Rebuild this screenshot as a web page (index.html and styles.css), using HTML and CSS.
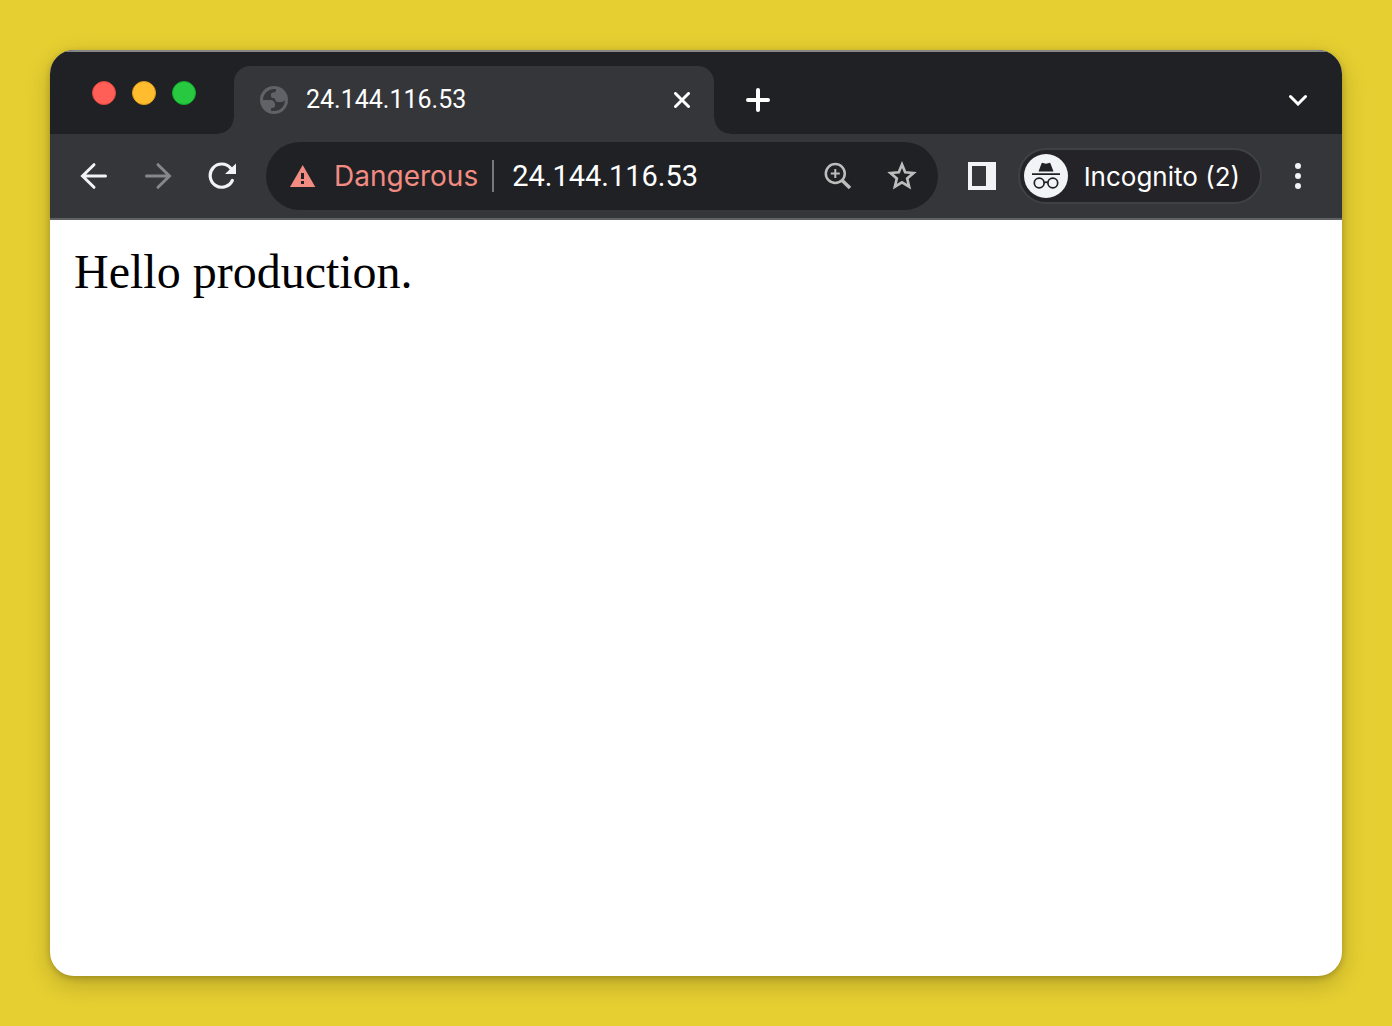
FILE: index.html
```html
<!DOCTYPE html>
<html lang="en">
<head>
<meta charset="utf-8">
<title>24.144.116.53</title>
<link rel="stylesheet" href="styles.css">
</head>
<body>
<div class="window">
  <header class="tab-strip">
    <div class="lights">
      <button class="light light-close" aria-label="Close window"></button>
      <button class="light light-minimize" aria-label="Minimize window"></button>
      <button class="light light-zoom" aria-label="Zoom window"></button>
    </div>
    <div class="tab">
      <svg class="favicon" width="28" height="28" viewBox="0 0 28 28" aria-hidden="true">
        <circle cx="14" cy="14" r="14" fill="#5f6368"/>
        <path d="M3 14C3 8 8 3 14 3H16V4.500C16 6 14.500 6.500 13 6.500C11.500 6.500 11 7.500 11 9V10C11 11.500 12 12 13.500 12C15 12 15 13 15.500 14.500C16 15.500 17 16 18.500 16H21C23 16 24 15 25 14C25 20.500 20 25 14 25H11V22.500C12 21.500 15 22 15 20V18.500C15 16.500 13.500 14 10.500 14Z" fill="#35363a"/>
      </svg>
      <span class="tab-title">24.144.116.53</span>
      <button class="tab-close" aria-label="Close tab">
        <svg width="16" height="16" viewBox="0 0 16 16"><path d="M1.500 1.500L14.500 14.500M14.500 1.500L1.500 14.500" fill="none" stroke="#fff" stroke-width="3" stroke-linecap="round"/></svg>
      </button>
    </div>
    <button class="new-tab" aria-label="New tab">
      <svg width="24" height="24" viewBox="0 0 24 24"><path d="M12 2V22M2 12H22" fill="none" stroke="#fff" stroke-width="4" stroke-linecap="round"/></svg>
    </button>
    <button class="tab-search" aria-label="Search tabs">
      <svg width="20" height="12" viewBox="0 0 20 12"><path d="M2.500 2.500L10 10L17.500 2.500" fill="none" stroke="#fff" stroke-width="3" stroke-linecap="round"/></svg>
    </button>
  </header>
  <nav class="toolbar">
    <button class="tool" aria-label="Back">
      <svg width="28" height="28" viewBox="0 0 28 28"><path d="M25.500 14H3M14 2.700L2.500 14L14 25.300" fill="none" stroke="#f1f3f4" stroke-width="3" stroke-linecap="round"/></svg>
    </button>
    <button class="tool" aria-label="Forward" disabled>
      <svg width="28" height="28" viewBox="0 0 28 28"><path d="M2.500 14H25M14 2.700L25.500 14L14 25.300" fill="none" stroke="#86878a" stroke-width="3" stroke-linecap="round"/></svg>
    </button>
    <button class="tool" aria-label="Reload">
      <svg width="28" height="28" viewBox="0 0 28 28"><path d="M24.300 18.500A11.600 11.600 0 1 1 22.700 6.200" fill="none" stroke="#f1f3f4" stroke-width="3.200" stroke-linecap="round"/><path d="M28 1.500V12H17Z" fill="#f1f3f4"/></svg>
    </button>
    <div class="omnibox">
      <button class="security">
        <svg width="26" height="22" viewBox="0 0 26 22" aria-hidden="true"><path d="M12.700 0L25.300 22H0Z" fill="#f28b82"/><path d="M11 8H14V14H11ZM11 16H14V19H11Z" fill="#202124"/></svg>
        <span>Dangerous</span>
      </button>
      <input class="address" type="text" value="24.144.116.53" aria-label="Address" spellcheck="false">
      <button class="tool" aria-label="Zoom in">
        <svg width="28" height="28" viewBox="0 0 28 28"><g fill="none" stroke="#bdbdbd"><circle cx="11.300" cy="11.500" r="9.500" stroke-width="2.500"/><path d="M11.300 7V16M6.800 11.500H15.800" stroke-width="2"/><path d="M18.500 18.700L26 26" stroke-width="3.500"/></g></svg>
      </button>
      <button class="tool" aria-label="Bookmark this page">
        <svg width="30" height="30" viewBox="0 0 30 30"><path d="M15 3.500L18.200 11.300L26.500 12L20.200 17.500L22.100 25.700L15 21.400L7.900 25.700L9.800 17.500L3.500 12L11.800 11.300Z" fill="none" stroke="#bdbdbd" stroke-width="2.700"/></svg>
      </button>
    </div>
    <button class="tool side-panel" aria-label="Side panel">
      <svg width="28" height="28" viewBox="0 0 28 28"><path d="M0 0H28V28H0ZM4 4V24H18V4Z" fill="#f1f3f4" fill-rule="evenodd"/></svg>
    </button>
    <button class="profile">
      <svg width="44" height="44" viewBox="0 0 44 44" aria-hidden="true">
        <circle cx="22" cy="22" r="22" fill="#f1f3f4"/>
        <path d="M14.500 17.500L17.500 9.500Q18 8.600 19 8.900L22 9.700L25 8.900Q26 8.600 26.500 9.500L29.500 17.500Z" fill="#202124"/>
        <path d="M8 20.200H36" stroke="#202124" stroke-width="1.800"/>
        <g fill="none" stroke="#202124" stroke-width="1.700"><circle cx="15.200" cy="29" r="4.900"/><circle cx="28.800" cy="29" r="4.900"/><path d="M20 28.700Q22 27.400 24 28.700"/></g>
      </svg>
      <span>Incognito (2)</span>
    </button>
    <button class="menu" aria-label="Menu">
      <svg width="6" height="26" viewBox="0 0 6 26"><g fill="#f1f3f4"><circle cx="3" cy="3" r="3"/><circle cx="3" cy="13" r="3"/><circle cx="3" cy="23" r="3"/></g></svg>
    </button>
  </nav>
  <main class="page">Hello production.</main>
</div>
</body>
</html>
```
FILE: styles.css
```css
* {
  box-sizing: border-box;
}

body {
  display: flex;
  min-height: 100vh;
  margin: 0;
  padding: 50px;
  background: #e6cf31;
  font-family: Inter, "Liberation Sans", sans-serif;
}

button {
  display: flex;
  flex: none;
  align-items: center;
  justify-content: center;
  margin: 0;
  padding: 0;
  border: 0;
  background: none;
  color: inherit;
  font: inherit;
}

svg {
  display: block;
  flex: none;
}

.window {
  display: flex;
  flex: 1;
  flex-direction: column;
  min-width: 0;
  overflow: hidden;
  border-radius: 24px;
  background: #fff;
  box-shadow: 0 2px 6px rgba(0, 0, 0, 0.2), 0 8px 24px rgba(0, 0, 0, 0.2);
}

.tab-strip {
  display: flex;
  height: 84px;
  padding: 14px 16px 0 42px;
  border-top: 2px solid #85868a;
  background: #202124;
  color: #fff;
}

.lights {
  display: flex;
  gap: 16px;
  width: 142px;
  padding-top: 15px;
}

.light {
  width: 24px;
  height: 24px;
  border-radius: 50%;
}

.light-close {
  border: 1px solid #e2463f;
  background: #ff5f57;
}

.light-minimize {
  border: 1px solid #e1a116;
  background: #febc2e;
}

.light-zoom {
  border: 1px solid #12ac28;
  background: #28c840;
}

.tab {
  position: relative;
  display: flex;
  align-items: center;
  width: 480px;
  padding: 0 16px 0 26px;
  border-radius: 16px 16px 0 0;
  background: #35363a;
}

.tab::before,
.tab::after {
  position: absolute;
  bottom: 0;
  width: 16px;
  height: 16px;
  content: "";
}

.tab::before {
  right: 100%;
  background: radial-gradient(circle at 0 0, #202124 15px, #35363a 16px);
}

.tab::after {
  left: 100%;
  background: radial-gradient(circle at 100% 0, #202124 15px, #35363a 16px);
}

.tab-title {
  flex: 1;
  margin-left: 18px;
  font-family: Roboto, sans-serif;
  font-size: 25px;
  line-height: 32px;
}

.tab-close {
  width: 32px;
  height: 32px;
}

.new-tab {
  width: 56px;
  margin-left: 16px;
}

.tab-search {
  width: 56px;
  margin-left: auto;
}

.toolbar {
  display: flex;
  align-items: center;
  height: 86px;
  padding: 0 16px 0 12px;
  border-bottom: 2px solid #606164;
  background: #35363a;
  color: #fff;
}

.tool {
  width: 64px;
  height: 56px;
}

.omnibox {
  display: flex;
  flex: 1;
  align-items: center;
  min-width: 0;
  height: 68px;
  margin: 0 12px;
  padding: 0 4px 0 24px;
  border-radius: 34px;
  background: #202124;
}

.security {
  gap: 18px;
  height: 32px;
  padding-right: 14px;
  border-right: 2px solid #77787b;
  color: #f28b82;
  font-size: 28px;
}

.address {
  flex: 1;
  min-width: 0;
  height: 40px;
  padding: 0 0 0 18px;
  border: 0;
  outline: 0;
  background: none;
  color: #fff;
  font-family: Roboto, sans-serif;
  font-size: 29px;
}

.profile {
  gap: 16px;
  height: 56px;
  margin-left: 4px;
  padding: 0 20px 0 4px;
  border: 2px solid #404145;
  border-radius: 28px;
  background: #242328;
  font-size: 26px;
}

.menu {
  width: 56px;
  height: 56px;
  margin-left: 8px;
}

.page {
  flex: 1;
  padding: 24px;
  color: #000;
  font-family: "Liberation Serif", serif;
  font-size: 48px;
  line-height: 56px;
}
```
